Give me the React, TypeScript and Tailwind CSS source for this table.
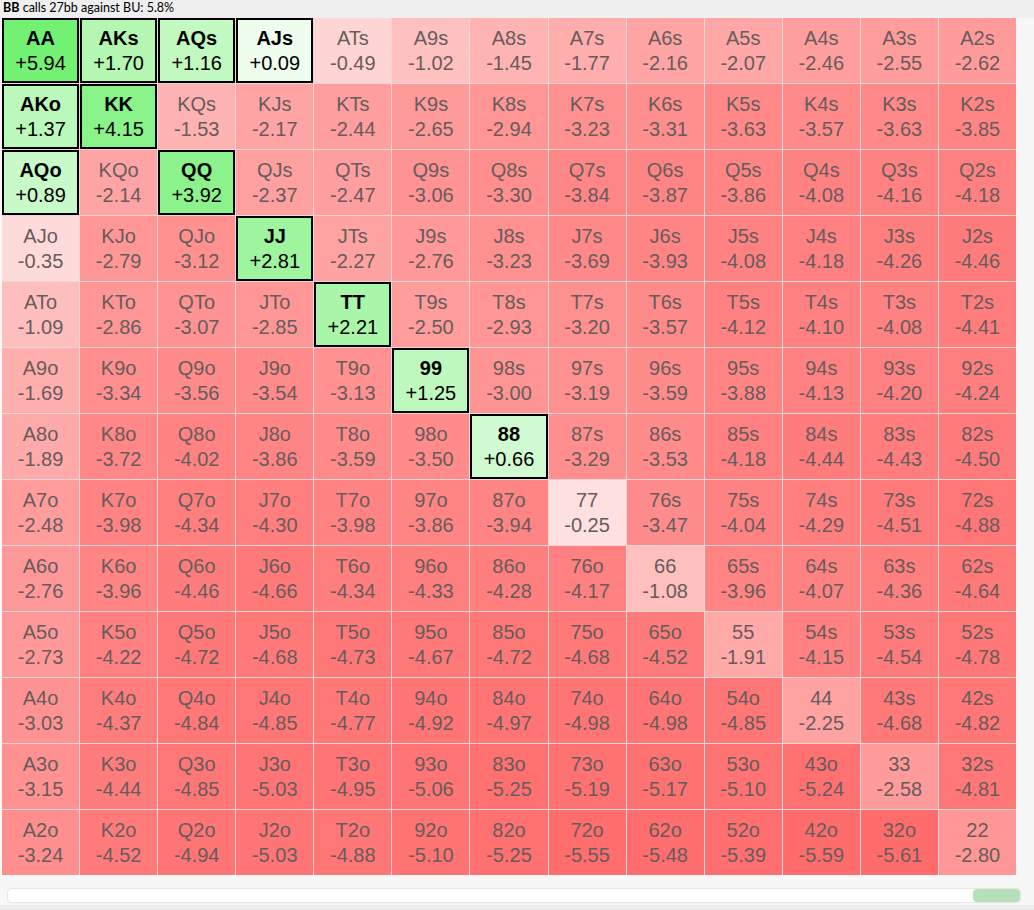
import React from 'react';

type Cell = { hand: string; ev: number };

// 13x13 range matrix, rows top to bottom (A..2), suited above the diagonal
const rows: [string, number][][] = [
  [['AA', 5.94], ['AKs', 1.7], ['AQs', 1.16], ['AJs', 0.09], ['ATs', -0.49], ['A9s', -1.02], ['A8s', -1.45], ['A7s', -1.77], ['A6s', -2.16], ['A5s', -2.07], ['A4s', -2.46], ['A3s', -2.55], ['A2s', -2.62]],
  [['AKo', 1.37], ['KK', 4.15], ['KQs', -1.53], ['KJs', -2.17], ['KTs', -2.44], ['K9s', -2.65], ['K8s', -2.94], ['K7s', -3.23], ['K6s', -3.31], ['K5s', -3.63], ['K4s', -3.57], ['K3s', -3.63], ['K2s', -3.85]],
  [['AQo', 0.89], ['KQo', -2.14], ['QQ', 3.92], ['QJs', -2.37], ['QTs', -2.47], ['Q9s', -3.06], ['Q8s', -3.3], ['Q7s', -3.84], ['Q6s', -3.87], ['Q5s', -3.86], ['Q4s', -4.08], ['Q3s', -4.16], ['Q2s', -4.18]],
  [['AJo', -0.35], ['KJo', -2.79], ['QJo', -3.12], ['JJ', 2.81], ['JTs', -2.27], ['J9s', -2.76], ['J8s', -3.23], ['J7s', -3.69], ['J6s', -3.93], ['J5s', -4.08], ['J4s', -4.18], ['J3s', -4.26], ['J2s', -4.46]],
  [['ATo', -1.09], ['KTo', -2.86], ['QTo', -3.07], ['JTo', -2.85], ['TT', 2.21], ['T9s', -2.5], ['T8s', -2.93], ['T7s', -3.2], ['T6s', -3.57], ['T5s', -4.12], ['T4s', -4.1], ['T3s', -4.08], ['T2s', -4.41]],
  [['A9o', -1.69], ['K9o', -3.34], ['Q9o', -3.56], ['J9o', -3.54], ['T9o', -3.13], ['99', 1.25], ['98s', -3.0], ['97s', -3.19], ['96s', -3.59], ['95s', -3.88], ['94s', -4.13], ['93s', -4.2], ['92s', -4.24]],
  [['A8o', -1.89], ['K8o', -3.72], ['Q8o', -4.02], ['J8o', -3.86], ['T8o', -3.59], ['98o', -3.5], ['88', 0.66], ['87s', -3.29], ['86s', -3.53], ['85s', -4.18], ['84s', -4.44], ['83s', -4.43], ['82s', -4.5]],
  [['A7o', -2.48], ['K7o', -3.98], ['Q7o', -4.34], ['J7o', -4.3], ['T7o', -3.98], ['97o', -3.86], ['87o', -3.94], ['77', -0.25], ['76s', -3.47], ['75s', -4.04], ['74s', -4.29], ['73s', -4.51], ['72s', -4.88]],
  [['A6o', -2.76], ['K6o', -3.96], ['Q6o', -4.46], ['J6o', -4.66], ['T6o', -4.34], ['96o', -4.33], ['86o', -4.28], ['76o', -4.17], ['66', -1.08], ['65s', -3.96], ['64s', -4.07], ['63s', -4.36], ['62s', -4.64]],
  [['A5o', -2.73], ['K5o', -4.22], ['Q5o', -4.72], ['J5o', -4.68], ['T5o', -4.73], ['95o', -4.67], ['85o', -4.72], ['75o', -4.68], ['65o', -4.52], ['55', -1.91], ['54s', -4.15], ['53s', -4.54], ['52s', -4.78]],
  [['A4o', -3.03], ['K4o', -4.37], ['Q4o', -4.84], ['J4o', -4.85], ['T4o', -4.77], ['94o', -4.92], ['84o', -4.97], ['74o', -4.98], ['64o', -4.98], ['54o', -4.85], ['44', -2.25], ['43s', -4.68], ['42s', -4.82]],
  [['A3o', -3.15], ['K3o', -4.44], ['Q3o', -4.85], ['J3o', -5.03], ['T3o', -4.95], ['93o', -5.06], ['83o', -5.25], ['73o', -5.19], ['63o', -5.17], ['53o', -5.1], ['43o', -5.24], ['33', -2.58], ['32s', -4.81]],
  [['A2o', -3.24], ['K2o', -4.52], ['Q2o', -4.94], ['J2o', -5.03], ['T2o', -4.88], ['92o', -5.1], ['82o', -5.25], ['72o', -5.55], ['62o', -5.48], ['52o', -5.39], ['42o', -5.59], ['32o', -5.61], ['22', -2.8]],
];

const cells: Cell[] = rows.flat().map(([hand, ev]) => ({ hand, ev }));

const cellColor = (ev: number) => {
  if (ev >= 0) {
    const d = Math.round(Math.min(140, 58 * Math.sqrt(ev)));
    return `rgb(${255 - d}, ${255 - Math.round(d * 0.1)}, ${255 - d})`;
  }
  const d = Math.round(Math.min(150, 62 * Math.sqrt(-ev)));
  return `rgb(255, ${255 - d}, ${255 - d})`;
};

const fmt = (ev: number) => (ev >= 0 ? '+' : '-') + Math.abs(ev).toFixed(2);

const HandCell = ({ cell }: { cell: Cell }) => {
  const called = cell.ev > 0;
  return (
    <div
      className={`flex flex-col items-center justify-center text-[20px] leading-[25px] ${
        called ? 'border-2 border-black text-black' : 'text-[#675c5c]'
      }`}
      style={{ backgroundColor: cellColor(cell.ev) }}
    >
      <span className={called ? 'font-bold' : ''}>{cell.hand}</span>
      <span>{fmt(cell.ev)}</span>
    </div>
  );
};

export default function App() {
  return (
    <div className="w-[1034px] h-[910px] flex flex-col bg-[#f7f7f7] overflow-hidden">
      <div className="h-[18px] bg-[#efefef] pl-[3px] text-[12.5px] leading-[16px] text-black font-['Lato',sans-serif]">
        <span className="font-bold">BB</span> calls 27bb against BU: 5.8%
      </div>
      <div className="pl-[2px]">
        <div className="w-[1014px] h-[857px] grid grid-cols-[repeat(13,minmax(0,1fr))] grid-rows-[repeat(13,minmax(0,1fr))] gap-px bg-[#ecd6d6] font-['Liberation_Sans',Arial,sans-serif]">
          {cells.map((cell) => (
            <HandCell key={cell.hand} cell={cell} />
          ))}
        </div>
      </div>
      <div className="mt-[13px] ml-[7px] w-[1014px] h-[15px] bg-white rounded-[4px] border border-[#e6e6e6] flex justify-end">
        <div className="w-[47px] h-full bg-[#b7dfb9] rounded-[4px]" />
      </div>
      <div className="flex-1 mt-[2px] bg-[#ececec]" />
    </div>
  );
}
